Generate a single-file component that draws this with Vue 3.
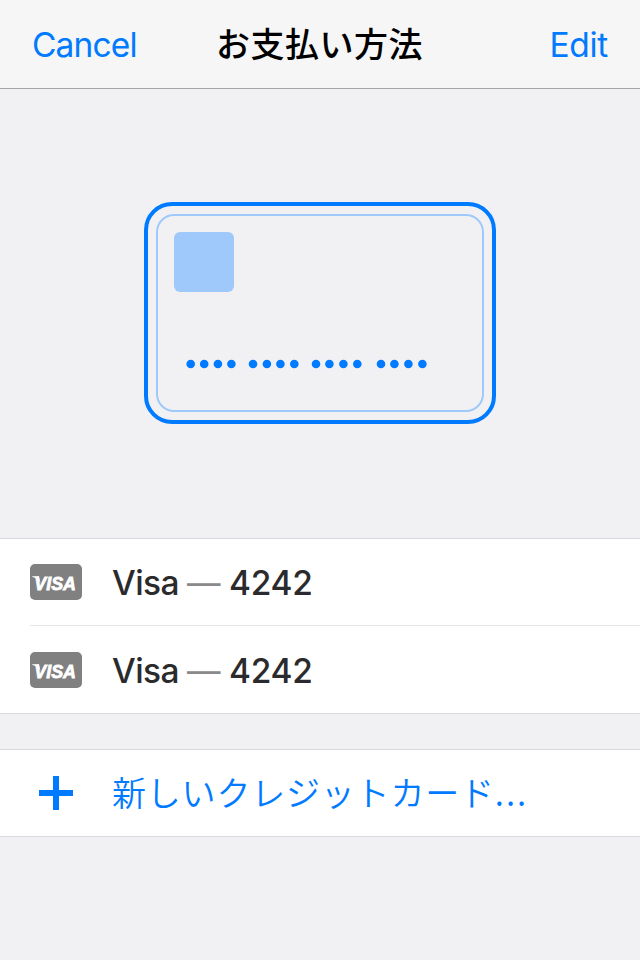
<script setup>
const cards = [
  { id: 1, brand: 'Visa', last4: '4242' },
  { id: 2, brand: 'Visa', last4: '4242' },
]
const dots = [190.7, 204.2, 217.9, 231.4, 253, 266.9, 280.4, 294.3, 316, 329.4, 343.4, 357.3, 381, 394.4, 408.4, 422.4]
</script>

<template>
  <main class="screen">
    <header class="navbar">
      <a class="action cancel">Cancel</a>
      <h1 class="title">お支払い方法</h1>
      <a class="action edit">Edit</a>
    </header>

    <section class="hero">
      <div class="card">
        <div class="card-inner">
          <div class="chip"></div>
          <svg class="dots" width="248" height="10" viewBox="184 359 248 10">
            <circle v-for="x in dots" :key="x" :cx="x" cy="364" r="4.3" />
          </svg>
        </div>
      </div>
    </section>

    <ul class="list">
      <li v-for="card in cards" :key="card.id" class="row">
        <svg class="logo" width="52" height="36" viewBox="0 0 52 36">
          <rect width="52" height="36" rx="5" fill="#808080" />
          <text class="mark" x="4.3" y="25.8" textLength="41.6" lengthAdjust="spacingAndGlyphs">VISA</text>
          <path d="M2.3 12.2H9L10.4 19Q7.6 13.8 2.3 12.9Z" fill="#fff" />
        </svg>
        <div class="label">
          <span class="brand">{{ card.brand }}</span><span class="dash">—</span><span class="digits">{{ card.last4 }}</span>
        </div>
      </li>
    </ul>

    <ul class="list">
      <li class="row add">
        <svg class="plus" width="52" height="36" viewBox="0 0 52 36">
          <path d="M9 18H43M26 1V35" stroke="#007aff" stroke-width="6" />
        </svg>
        <span class="add-label">新しいクレジットカード<span class="ellipsis">...</span></span>
      </li>
    </ul>
  </main>
</template>

<style>
body {
  background: #f1f1f4;
}
</style>

<style scoped>
.screen {
  width: 640px;
  height: 960px;
  overflow: hidden;
  background: #f1f1f4;
  font-family: Inter, "Noto Sans CJK JP", sans-serif;
  font-size: 34px;
}
.navbar {
  box-sizing: border-box;
  height: 89px;
  padding: 0 32px;
  display: grid;
  grid-template-columns: 1fr auto 1fr;
  align-items: start;
  background: #f6f6f6;
  border-bottom: 1px solid #a7a7aa;
}
.action {
  color: #007aff;
  font-size: 33.5px;
  letter-spacing: -0.85px;
  line-height: 90px;
  height: 88px;
}
.edit {
  text-align: right;
  letter-spacing: -0.3px;
}
.title {
  margin: 0;
  padding-right: 1px;
  font-family: "Noto Sans CJK JP", sans-serif;
  font-size: 34px;
  font-weight: 500;
  letter-spacing: 0.5px;
  line-height: 86px;
  color: #000;
}
.hero {
  box-sizing: border-box;
  height: 449px;
  padding-bottom: 2px;
  display: flex;
  justify-content: center;
  align-items: center;
}
.card {
  box-sizing: border-box;
  width: 352px;
  height: 222px;
  padding: 8px;
  border: 4px solid #007aff;
  border-radius: 28px;
}
.card-inner {
  box-sizing: border-box;
  height: 198px;
  padding: 16px;
  border: 2px solid #9fc9fa;
  border-radius: 18px;
}
.chip {
  width: 60px;
  height: 60px;
  border-radius: 6px;
  background: #9fc9fa;
}
.dots {
  display: block;
  margin: 67px 0 0 10px;
  fill: #007aff;
}
.list {
  margin: 0 0 35px;
  padding: 0 0 0 30px;
  list-style: none;
  background: #fff;
  border-top: 1px solid #d9d9dd;
  border-bottom: 1px solid #d9d9dd;
}
.row {
  height: 86px;
  display: flex;
  align-items: center;
  gap: 30px;
}
.row + .row {
  height: 87px;
  border-top: 1px solid #e6e6e8;
}
.logo,
.plus {
  flex: none;
}
.mark {
  fill: #fff;
  stroke: #fff;
  stroke-width: 0.8px;
  font: italic 700 19px "Liberation Sans", sans-serif;
}
.label {
  display: flex;
  align-items: center;
  padding-top: 1px;
  color: #2b2b2d;
  font-size: 33.5px;
  font-weight: 500;
  line-height: 44px;
}
.row + .row .label {
  padding-top: 2px;
}
.brand {
  width: 66px;
  letter-spacing: -0.6px;
}
.dash {
  width: 34px;
  margin: 0 8px 0 9px;
  color: #8a8a8c;
  font-weight: 400;
}
.digits {
  letter-spacing: -0.25px;
}
.add-label {
  padding-bottom: 3px;
  color: #007aff;
  font-family: "Noto Sans CJK JP", sans-serif;
  font-weight: 350;
  letter-spacing: 0.8px;
  line-height: 44px;
  white-space: nowrap;
}
.ellipsis {
  letter-spacing: 2px;
}
</style>
